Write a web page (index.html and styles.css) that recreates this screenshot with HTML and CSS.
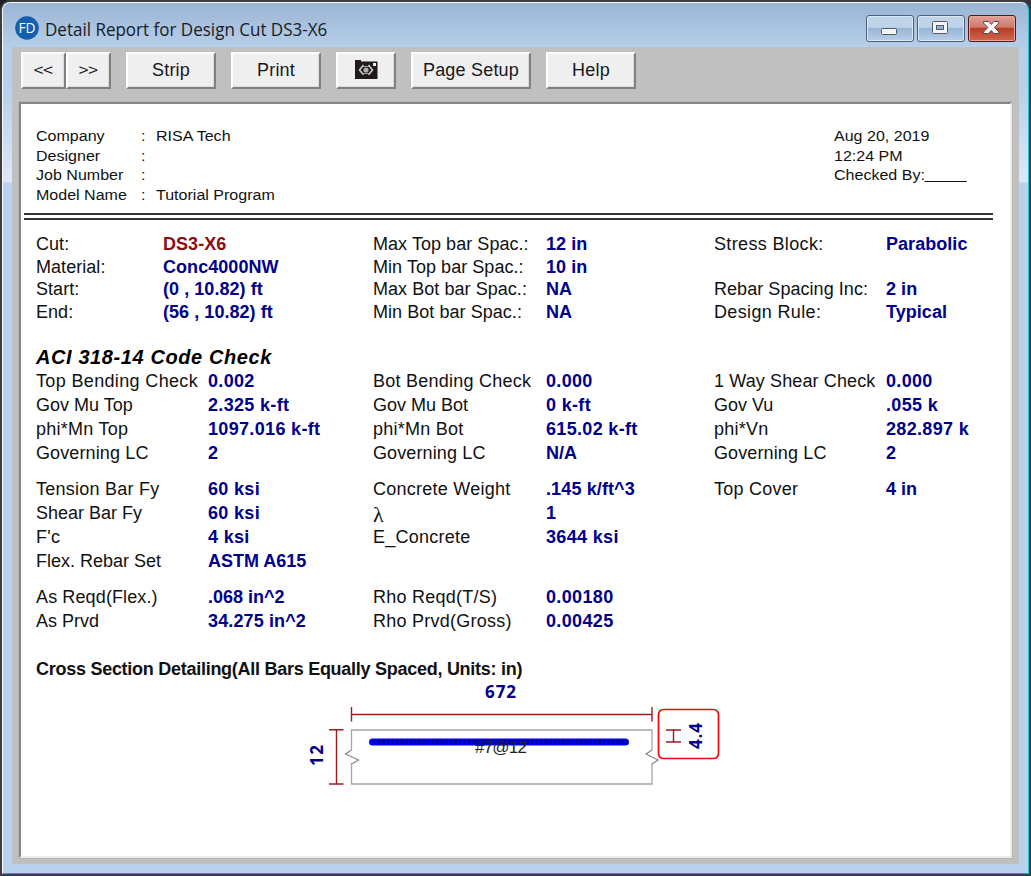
FILE: index.html
```html
<!DOCTYPE html>
<html lang="en">
<head>
<meta charset="utf-8">
<title>Detail Report for Design Cut DS3-X6</title>
<link rel="stylesheet" href="styles.css">
</head>
<body>
<div class="window">
  <header class="titlebar">
    <svg class="app-icon" width="24" height="24" viewBox="0 0 24 24"><circle cx="12" cy="12" r="11.800" fill="#1560ae"/><text x="12" y="17" text-anchor="middle" class="app-letters" textLength="17" lengthAdjust="spacingAndGlyphs">FD</text></svg>
    <h1 class="title"><span>Detail Report for Design Cut DS3-X6</span></h1>
    <div class="controls">
      <button class="ctl" aria-label="Minimize"><svg width="46" height="25"><rect x="14.500" y="12.500" width="15" height="6" rx="1" fill="#f4f4f4" stroke="#555b68"/></svg></button>
      <button class="ctl" aria-label="Maximize"><svg width="46" height="25"><rect x="14.500" y="5.500" width="15" height="12" rx="1" fill="#f4f4f4" stroke="#555b68"/><rect x="18.500" y="9.500" width="7" height="4" fill="#8fb0d3" stroke="#555b68"/></svg></button>
      <button class="ctl ctl-close" aria-label="Close"><svg width="46" height="25"><path d="M14.500 5.500h5l2.700 3 2.700-3h5v1.500l-4.400 4.500 4.400 4.500v1.500h-5l-2.700-3-2.700 3h-5v-1.500l4.400-4.500-4.400-4.500z" fill="#f7f7f7" stroke="#5a4a50"/></svg></button>
    </div>
  </header>
  <main class="client">
    <nav class="toolbar">
      <div class="pair"><button class="btn nav"><span>&lt;&lt;</span></button><button class="btn nav"><span>&gt;&gt;</span></button></div>
      <button class="btn">Strip</button>
      <button class="btn">Print</button>
      <button class="btn cam" aria-label="Snapshot"><svg width="24" height="20" viewBox="0 0 24 20"><path d="M1 1.500V0h6v1.500h16.500V19H1z" fill="#21191b"/><rect x="19" y="3" width="3" height="3" fill="#eee"/><path d="M9.500 5 5.500 10l4 4.800M14.500 5l4 5-4 4.800" fill="none" stroke="#c8c8c8" stroke-width="1.600"/><path d="M9 6.500h6M9 13.500h6" stroke="#999"/><circle cx="12" cy="10" r="2.600" fill="#aaa"/></svg></button>
      <button class="btn setup">Page Setup</button>
      <button class="btn">Help</button>
    </nav>
    <section class="report">
      <div class="head">
        <div class="meta">
          <span>Company</span><span>:</span><span>RISA Tech</span>
          <span>Designer</span><span>:</span><span></span>
          <span>Job Number</span><span>:</span><span></span>
          <span>Model Name</span><span>:</span><span>Tutorial Program</span>
        </div>
        <div class="stamp"><span>Aug 20, 2019</span><span>12:24 PM</span><span>Checked By:<i class="blank"></i></span></div>
      </div>
      <div class="rule"></div>
      <div class="grid general">
        <span>Cut:</span><b class="red">DS3-X6</b><span>Max Top bar Spac.:</span><b>12 in</b><span class="wide">Stress Block:</span><b>Parabolic</b>
        <span>Material:</span><b>Conc4000NW</b><span>Min Top bar Spac.:</span><b>10 in</b><span></span><b></b>
        <span>Start:</span><b>(0 , 10.82) ft</b><span>Max Bot bar Spac.:</span><b>NA</b><span>Rebar Spacing Inc:</span><b>2 in</b>
        <span>End:</span><b>(56 , 10.82) ft</b><span>Min Bot bar Spac.:</span><b>NA</b><span class="wide">Design Rule:</span><b>Typical</b>
      </div>
      <h2 class="code">ACI 318-14 Code Check</h2>
      <div class="grid checks">
        <span class="wide">Top Bending Check</span><b>0.002</b><span>Bot Bending Check</span><b>0.000</b><span class="mid">1 Way Shear Check</span><b>0.000</b>
        <span class="tight">Gov Mu Top</span><b>2.325 k-ft</b><span class="tight">Gov Mu Bot</span><b>0 k-ft</b><span class="tight">Gov Vu</span><b>.055 k</b>
        <span>phi*Mn Top</span><b>1097.016 k-ft</b><span>phi*Mn Bot</span><b>615.02 k-ft</b><span>phi*Vn</span><b>282.897 k</b>
        <span class="mid">Governing LC</span><b>2</b><span class="mid">Governing LC</span><b class="tight">N/A</b><span class="mid">Governing LC</span><b>2</b>
      </div>
      <div class="grid checks">
        <span>Tension Bar Fy</span><b>60 ksi</b><span>Concrete Weight</span><b class="mid">.145 k/ft^3</b><span>Top Cover</span><b class="tight">4 in</b>
        <span class="tight">Shear Bar Fy</span><b>60 ksi</b><span class="lambda">λ</span><b>1</b><span></span><b></b>
        <span>F'c</span><b>4 ksi</b><span>E_Concrete</span><b>3644 ksi</b><span></span><b></b>
        <span class="tight">Flex. Rebar Set</span><b class="tight">ASTM A615</b><span></span><b></b><span></span><b></b>
      </div>
      <div class="grid checks">
        <span class="mid">As Reqd(Flex.)</span><b class="tight">.068 in^2</b><span>Rho Reqd(T/S)</span><b class="wide">0.00180</b><span></span><b></b>
        <span class="tight">As Prvd</span><b class="mid">34.275 in^2</b><span>Rho Prvd(Gross)</span><b class="wide">0.00425</b><span></span><b></b>
      </div>
      <h3 class="detail">Cross Section Detailing(All Bars Equally Spaced, Units: in)</h3>
      <svg class="section" width="440" height="120" viewBox="290 680 440 120">
        <g fill="none" stroke="#a5a5a5" stroke-width="1.300">
          <path d="M351.500 750V730H652v20M351.500 763v21H652v-21"/>
          <path d="M351.500 750l-6 4 13 6-7 4M652 750l-6 4 12 6-6 4" stroke="#8a8a8a"/>
        </g>
        <g fill="none" stroke="#9c1c22" stroke-width="1.400">
          <path d="M351.500 714.500H652M351.500 707v14.500M652 707v14.500M336.500 729v55M329 729.700h14.500M329 784h14.500M673.500 729v13M666 730h15M666 742h15"/>
        </g>
        <path d="M372.500 742H625.500" stroke="#0000f0" stroke-width="7" stroke-linecap="round"/>
        <path d="M373 742H628" stroke="#00009c" stroke-width="4" stroke-dasharray="3 1.500"/>
        <text x="475" y="752.500" class="bar-label" textLength="52">#7@12</text>
        <text x="485" y="698" class="dim" textLength="31">672</text>
        <text transform="translate(323 766) rotate(-90)" class="dim" textLength="21">12</text>
        <text transform="translate(702 749) rotate(-90)" class="dim" textLength="26">4.4</text>
        <rect x="658.500" y="709.500" width="60" height="49" rx="5" fill="none" stroke="#f00808" stroke-width="1.700"/>
      </svg>
    </section>
  </main>
</div>
</body>
</html>
```
FILE: styles.css
```css
* { box-sizing: border-box; }
body { margin: 0; padding: 2px; height: 876px; overflow: hidden; background: linear-gradient(90deg, #1b1d20 0 50%, #30363a 50%); font-family: "Liberation Sans", Arial, sans-serif; color: #111; }
h1, h2, h3 { margin: 0; }
.window {
  width: 1027px; height: 872px; padding: 0 9px 9px; display: flex; flex-direction: column;
  border: 1px solid #f4fafd; border-right-color: #22c4e4; border-bottom: 1px solid #16a9c4; border-radius: 8px 8px 0 0;
  background: linear-gradient(#9ab4d3 0, #b5cfeb 44px, #b9d1ea 90px, #dce8f6 179px, #b9d1ea 180px);
  box-shadow: 0 0 0 2px #3c3d40;
}
.titlebar { height: 44px; flex: none; display: flex; align-items: flex-start; padding: 13px 3px 0 3px; }
.app-letters { font: 14px "Open Sans", sans-serif; fill: #fff; }
.title { flex: 1; padding: 1px 0 0 6px; font: 18px/24px "Open Sans", sans-serif; color: #191b22; white-space: nowrap; }
.title span { display: inline-block; transform: scaleX(.945); transform-origin: left; }
.controls { display: flex; gap: 3px; }
.ctl { width: 48px; height: 27px; margin-top: -1px; padding: 0; border: 1px solid #4c5f7b; border-radius: 3px; box-shadow: inset 0 0 0 1px #dbe8f5; background: linear-gradient(#c0d4e9 0 45%, #97b5d5 50%, #b8d0e9); }
.ctl svg { display: block; }
.ctl-close { border-color: #55151a; box-shadow: inset 0 0 0 1px #e8a799; background: linear-gradient(#dfa097, #d0796d 45%, #b93c24 50%, #ce684e); }
.client { flex: 1; background: #c0c0c0; padding: 5px 6px 5px; display: flex; flex-direction: column; }
.toolbar { display: flex; gap: 15px; height: 49px; padding-left: 3px; align-items: flex-start; }
.pair { display: flex; }
.btn { width: 90px; height: 37px; padding: 0 0 2px 0; border: 2px solid; border-color: #fff #808080 #808080 #fff; background: #efefef; box-shadow: inset -1px -1px #dcdcdc; font: 18px/30px "Liberation Sans", Arial, sans-serif; letter-spacing: .2px; color: #17171c; }
.nav { width: 45px; }
.nav span { display: inline-block; transform: scale(.96, .8); letter-spacing: -.5px; }
.cam { width: 60px; }
.cam svg { display: block; margin: 0 auto; }
.setup { width: 120px; }
.report { flex: 1; background: #fff; border: 3px solid; border-color: #868686 #ededed #ededed #868686; padding: 23px 0 0 15px; outline: 1px solid #b4b4b4; outline-offset: -1px; white-space: nowrap; }
.head { display: flex; height: 86px; font-size: 14px; line-height: 19.600px; }
.head span { display: block; transform: scaleX(1.145); transform-origin: left; }
.meta { width: 798px; display: grid; grid-template-columns: 105px 15px 200px; grid-auto-rows: 19.600px; }
.blank { display: inline-block; width: 37px; border-bottom: 1px solid #111; vertical-align: -2px; }
.rule { width: 969px; height: 7px; margin: 0 0 0 -12px; border: solid #333; border-width: 2px 0; }
.grid { display: grid; grid-template-columns: 172px 165px 173px 168px 172px 100px; font-size: 18px; }
.grid b { color: #00008b; }
.grid .red { color: #8b0c12; }
.general { grid-template-columns: 127px 210px 173px 168px 172px 100px; grid-auto-rows: 22.600px; line-height: 22.600px; margin-top: 13px; letter-spacing: .05px; }
.code { font: italic bold 20px/24px "Liberation Sans", Arial, sans-serif; letter-spacing: .6px; margin-top: 22px; color: #000; }
.checks { grid-auto-rows: 24px; line-height: 24px; margin-bottom: 12px; letter-spacing: .25px; }
.checks b { letter-spacing: .33px; }
.grid .wide { letter-spacing: .35px; }
.grid .mid { letter-spacing: .12px; }
.grid .tight { letter-spacing: 0; }
.grid .lambda { font: 22px/28px "Liberation Serif", serif; }
.detail { font: bold 18px/24px "Liberation Sans", Arial, sans-serif; letter-spacing: -.27px; margin-top: 24px; }
.section { display: block; margin: -1px 0 0 254px; overflow: visible; }
.dim { font: bold 17px "Open Sans", sans-serif; fill: #00008b; }
.bar-label { font: 17px "Liberation Sans", Arial, sans-serif; fill: #222; }
```
